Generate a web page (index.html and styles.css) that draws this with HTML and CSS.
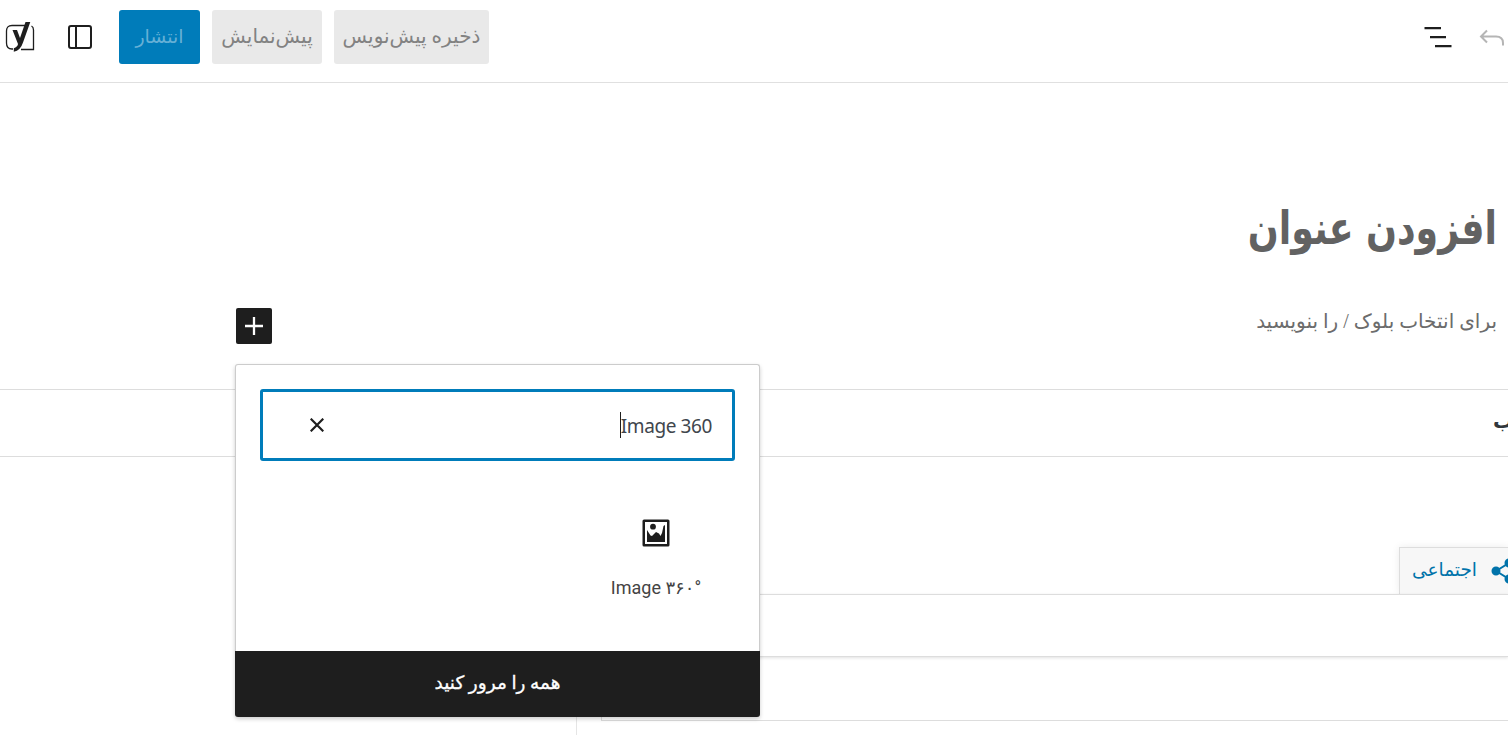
FILE: index.html
```
<!DOCTYPE html>
<html lang="fa" dir="rtl">
<head>
    <meta charset="UTF-8">
    <meta name="viewport" content="width=device-width, initial-scale=1.0">
    <title>افزودن نوشته</title>
    <link rel="stylesheet" href="styles.css">
</head>
<body>
    <header class="toolbar">
        <div class="tools">
            <button class="icon-btn undo">
                <svg width="28" height="24" viewBox="0 0 28 24" fill="none" stroke="#b5b5b5" stroke-width="2">
                    <path d="M9 5.500L3 11.500L9 17.500M3 11.500H18Q25 11.500 25 18V20.500"/>
                </svg>
            </button>
            <button class="icon-btn">
                <svg width="28" height="22" viewBox="0 0 28 22" fill="#1e1e1e">
                    <path d="M.5 1h16.500v2.200H.5zM6 10h16v2.200H6zM11 19h16.500v2.200H11z"/>
                </svg>
            </button>
        </div>
        <div class="settings">
            <button class="btn draft"><span>ذخیره پیش‌نویس</span></button>
            <button class="btn preview"><span>پیش‌نمایش</span></button>
            <button class="btn primary"><span>انتشار</span></button>
            <button class="icon-btn sidebar-btn">
                <svg width="24" height="24" viewBox="0 0 24 24" fill="none" stroke="#1e1e1e" stroke-width="2">
                    <rect x="1" y="1" width="22" height="22" rx="2"/>
                    <path d="M8 1v22"/>
                </svg>
            </button>
            <button class="icon-btn yoast-btn">
                <svg width="30" height="30" viewBox="0 0 30 30" fill="none">
                    <path d="M20 3.500H7Q1.500 3.500 1.500 9V21Q1.500 27 7 27H8M16 27.500H28.500V8Q28.500 5 26.500 4" stroke="#1e1e1e" stroke-width="1.300"/>
                    <path d="M7.500 8h4.500l3 8L20.500 0h4.800L18 20.500Q15.500 28.500 8.800 29.800v-3.600Q12.500 25 13 22Z" fill="#1e1e1e"/>
                </svg>
            </button>
        </div>
    </header>

    <main class="editor">
        <h1>افزودن عنوان</h1>
        <div class="paragraph">
            <p>برای انتخاب بلوک / را بنویسید</p>
            <div class="inserter">
                <button class="add-btn">
                    <svg width="18" height="18" viewBox="0 0 18 18" stroke="#fff" stroke-width="2.300">
                        <path d="M0 9h18M9 0v18"/>
                    </svg>
                </button>
                <div class="popover">
                    <div class="search">
                        <span class="query" dir="ltr">Image 360</span>
                        <svg width="14" height="14" viewBox="0 0 14 14" stroke="#1e1e1e" stroke-width="2.200">
                            <path d="M.7.700l12.600 12.600M13.300.700L.7 13.300"/>
                        </svg>
                    </div>
                    <div class="results">
                        <div class="block-item">
                            <svg width="28" height="28" viewBox="0 0 28 28" fill="#1e1e1e">
                                <path fill-rule="evenodd" d="M2 .500h24q1.500 0 1.500 1.500v24q0 1.500-1.500 1.500H2Q.5 27.500.5 26V2Q.5.500 2 .500zM3 3v22h22V3z"/>
                                <circle cx="11" cy="7.700" r="2.900"/>
                                <path d="M5 11l3.500 5.500 1.500.500 4-4 3 1.500 1.500 2.500 1.500-3L21.500 7l1.500-1v17H5z"/>
                            </svg>
                            <span class="block-name" dir="ltr">Image <bdi>۳۶۰</bdi>°</span>
                        </div>
                    </div>
                    <button class="browse"><span>همه را مرور کنید</span></button>
                </div>
            </div>
        </div>
    </main>

    <section class="metabox">
        <h2><span>ب</span></h2>
        <div class="tabs">
            <div class="tab">
                <svg width="17" height="26" viewBox="0 0 17 26" fill="#0073aa" stroke="#0073aa" stroke-width="2">
                    <path d="M5 13L18 5M5 13l13 8" fill="none"/>
                    <circle cx="5" cy="13" r="3.500"/>
                    <circle cx="18" cy="5" r="3.500"/>
                    <circle cx="18" cy="21" r="3.500"/>
                </svg>
                <span>اجتماعی</span>
            </div>
        </div>
        <div class="panel-head"></div>
        <div class="panel-body">
            <div class="field"></div>
        </div>
    </section>
</body>
</html>
```
FILE: styles.css
```
* {
    box-sizing: border-box;
}
body {
    margin: 0;
    height: 735px;
    overflow: hidden;
    background: #fff;
    color: #1e1e1e;
    font-family: Roboto, "DejaVu Sans", sans-serif;
}
button {
    border: none;
    padding: 0;
    background: none;
    font-family: inherit;
}
svg {
    display: block;
    flex: none;
}
span {
    white-space: nowrap;
}
.toolbar {
    height: 83px;
    padding: 10px 2px 18px 5px;
    border-bottom: 1px solid #e0e0e0;
    display: flex;
    justify-content: space-between;
}
.tools,
.settings {
    display: flex;
    align-items: center;
}
.tools {
    gap: 26px;
}
.btn {
    height: 54px;
    margin-left: 12px;
    padding-bottom: 2px;
    border-radius: 3px;
    background: #e9e9e9;
    color: #828282;
    font-size: 20px;
    display: flex;
    justify-content: center;
    align-items: center;
}
.draft {
    width: 155px;
}
.preview {
    width: 110px;
}
.primary {
    width: 81px;
    margin-left: 27px;
    background: #007cba;
    color: #66b0d6;
    font-size: 19px;
}
.yoast-btn {
    margin-right: 33px;
}
.editor {
    height: 306px;
    padding: 112px 11px 0;
}
h1 {
    margin: 0;
    height: 70px;
    line-height: 66px;
    font-size: 46px;
    word-spacing: 4px;
    color: #626262;
    transform: scaleX(0.79);
    transform-origin: right;
}
.paragraph {
    position: relative;
    z-index: 1;
    margin-top: 38px;
}
.paragraph p {
    margin: 0;
    line-height: 36px;
    font-family: "Liberation Serif", "DejaVu Sans", serif;
    font-size: 20px;
    color: #6c6c6c;
}
.inserter {
    position: absolute;
    left: 224px;
    top: 5px;
    width: 525px;
}
.add-btn {
    width: 36px;
    height: 36px;
    margin-right: 488px;
    border-radius: 2px;
    background: #1e1e1e;
    display: flex;
    justify-content: center;
    align-items: center;
}
.popover {
    height: 353px;
    margin-top: 20px;
    border: 1px solid #ccc;
    border-bottom: none;
    border-radius: 3px;
    background: #fff;
    box-shadow: 0 2px 4px rgba(0, 0, 0, 0.2);
}
.search {
    height: 72px;
    margin: 24px 24px 0;
    padding: 0 20px 0 47px;
    border: 3px solid #007cba;
    border-radius: 3px;
    display: flex;
    justify-content: space-between;
    align-items: center;
}
.query {
    height: 26px;
    border-left: 1px solid #1e1e1e;
    font: 19px/28px "Noto Sans", sans-serif;
    letter-spacing: -0.4px;
    color: #40464d;
}
.results {
    height: 190px;
    padding: 58px 24px 0;
}
.block-item {
    width: 158px;
    display: flex;
    flex-direction: column;
    align-items: center;
}
.block-name {
    margin-top: 28px;
    font-size: 18px;
    line-height: 26px;
    color: #444;
}
.browse {
    display: block;
    width: 525px;
    height: 66px;
    margin: 0 -1px;
    padding-bottom: 2px;
    border-radius: 0 0 3px 3px;
    background: #1e1e1e;
    color: #fff;
    font-size: 18.5px;
    -webkit-text-stroke: 0.3px #fff;
}
.metabox h2 {
    margin: 0;
    height: 68px;
    border-top: 1px solid #ddd;
    border-bottom: 1px solid #ddd;
    line-height: 62px;
    font-size: 20px;
    color: #32373c;
}
.metabox h2 span {
    margin-right: -5px;
}
.tabs {
    height: 137px;
    padding-top: 90px;
    display: flex;
}
.tab {
    width: 109px;
    height: 47px;
    border: 1px solid #ddd;
    border-width: 1px 0 0 1px;
    background: #f7f7f7;
    box-shadow: 0 0 8px rgba(0, 0, 0, 0.08);
    color: #0073aa;
    font-size: 18.5px;
    display: flex;
    align-items: center;
    gap: 14px;
}
.tab span {
    padding-bottom: 3px;
}
.panel-head {
    position: relative;
    width: 932px;
    height: 63px;
    border: 1px solid #ddd;
    border-width: 1px 0 1px 1px;
    background: #fff;
    box-shadow: 0 1px 3px rgba(0, 0, 0, 0.12);
}
.panel-body {
    width: 932px;
    height: 78px;
    border-left: 1px solid #e5e5e5;
}
.field {
    width: 907px;
    height: 64px;
    border: 1px solid #ddd;
    border-width: 0 0 1px 1px;
}
```
